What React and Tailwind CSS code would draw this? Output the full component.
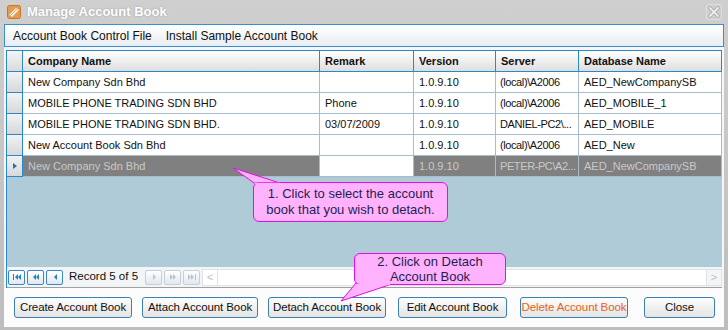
import React from 'react'

const ROWS = [
  { name: 'New Company Sdn Bhd', remark: '', version: '1.0.9.10', server: '(local)\\A2006', db: 'AED_NewCompanySB' },
  { name: 'MOBILE PHONE TRADING SDN BHD', remark: 'Phone', version: '1.0.9.10', server: '(local)\\A2006', db: 'AED_MOBILE_1' },
  { name: 'MOBILE PHONE TRADING SDN BHD.', remark: '03/07/2009', version: '1.0.9.10', server: 'DANIEL-PC2\\...', db: 'AED_MOBILE' },
  { name: 'New Account Book Sdn Bhd', remark: '', version: '1.0.9.10', server: '(local)\\A2006', db: 'AED_New' },
  { name: 'New Company Sdn Bhd', remark: '', version: '1.0.9.10', server: 'PETER-PC\\A2...', db: 'AED_NewCompanySB', selected: true },
]

const COLS = 'grid grid-cols-[16px_297px_94px_82px_83px_1fr]'

function NavBtn({ kind, disabled }) {
  const c = disabled ? '#b9c4cf' : '#2a7fc4'
  const tri = (x, dir) =>
    dir === 'l' ? `M${x} 4 L${x} 10 L${x - 3} 7 Z` : `M${x} 4 L${x} 10 L${x + 3} 7 Z`
  let d = ''
  if (kind === 'first') d = 'M4 4 H5 V10 H4 Z ' + tri(9, 'l') + ' ' + tri(12, 'l')
  if (kind === 'pprev') d = tri(8, 'l') + ' ' + tri(11, 'l')
  if (kind === 'prev') d = tri(10, 'l')
  if (kind === 'next') d = tri(7, 'r')
  if (kind === 'nnext') d = tri(5, 'r') + ' ' + tri(8, 'r')
  if (kind === 'last') d = tri(4, 'r') + ' ' + tri(7, 'r') + ' M11 4 H12 V10 H11 Z'
  return (
    <div
      className={`w-[17px] h-[15px] rounded-[2px] border flex items-center justify-center bg-gradient-to-b from-[#ffffff] to-[#e2e8ee] ${
        disabled ? 'border-[#c4d0dc]' : 'border-[#3b86c6]'
      }`}
    >
      <svg width="15" height="14" viewBox="0 0 15 14">
        <path d={d} fill={c} />
      </svg>
    </div>
  )
}

function Btn({ children, className, orange }) {
  return (
    <div
      className={`h-[21px] rounded-[3px] border border-[#3c7fb1] bg-gradient-to-b from-[#fdfdfd] to-[#e4e4e4] flex items-center justify-center whitespace-nowrap text-[11.5px] tracking-[-0.1px] ${
        orange ? 'text-[#e0651e]' : 'text-[#111]'
      } ${className}`}
    >
      {children}
    </div>
  )
}

export default function App() {
  return (
    <div className="relative w-[728px] h-[330px] overflow-hidden bg-gradient-to-b from-[#cfcfcf] to-[#bdbdbd] flex flex-col font-['Liberation_Sans',Arial,sans-serif]">
      {/* Title bar */}
      <div className="h-[24px] flex items-center pl-[7px] pr-[6px]">
        <svg width="14" height="14" viewBox="0 0 14 14">
          <rect x="0.5" y="0.5" width="13" height="13" rx="2" fill="#e79a4c" stroke="#c2772e" />
          <path d="M2 10 L9 3 L12 5 L5 12 Z" fill="#f8efe2" />
          <path d="M3 11 L10 4" stroke="#b5a58e" strokeWidth="0.8" />
        </svg>
        <span className="ml-[6px] text-[13px] font-bold text-white [text-shadow:0_0_2px_rgba(0,0,0,0.25)]">
          Manage Account Book
        </span>
        <div className="ml-auto w-[16px] h-[16px] rounded-[2px] border border-[#dedede] bg-[#cecece] flex items-center justify-center">
          <svg width="12" height="12" viewBox="0 0 12 12">
            <path d="M2 2 L10 10 M10 2 L2 10" stroke="#ababab" strokeWidth="3.2" strokeLinecap="square" />
            <path d="M2 2 L10 10 M10 2 L2 10" stroke="#f6f6f6" strokeWidth="1.6" strokeLinecap="square" />
          </svg>
        </div>
      </div>

      {/* Body */}
      <div className="mx-[4px] h-[303px] bg-[#f6f6f6] flex flex-col">
        <div className="h-[23px] border border-[#3b8ed0] bg-gradient-to-b from-[#ffffff] to-[#e9edf1] flex items-center pl-[8px] gap-[14px] text-[12px] text-[#111]">
          <span>Account Book Control File</span>
          <span>Install Sample Account Book</span>
        </div>

        <div className="mt-[3px] mx-[2px] flex flex-col h-[238px] border-l border-[#2b88c8]">
          {/* header */}
          <div className={`${COLS} h-[22px] text-[11px] font-bold text-[#111]`}>
            <div className="border-t border-r border-b border-[#2b88c8] bg-gradient-to-b from-[#f4f4f4] to-[#dadada]" />
            {['Company Name', 'Remark', 'Version', 'Server', 'Database Name'].map(h => (
              <div
                key={h}
                className="border-t border-r border-b border-[#2b88c8] bg-gradient-to-b from-[#ffffff] to-[#dedede] flex items-center pl-[5px]"
              >
                {h}
              </div>
            ))}
          </div>

          {/* rows */}
          {ROWS.map((r, i) => (
            <div key={i} className={`${COLS} h-[21px] text-[11px]`}>
              <div className="border-r border-b border-[#2b88c8] bg-gradient-to-b from-[#f2f2f2] to-[#d8d8d8] flex items-center justify-center">
                {r.selected && (
                  <svg width="6" height="8" viewBox="0 0 6 8">
                    <path d="M1 1 L5 4 L1 7 Z" fill="#2a6fb4" />
                  </svg>
                )}
              </div>
              {[r.name, r.remark, r.version, r.server, r.db].map((v, j) => {
                const white = !r.selected || j === 1
                return (
                  <div
                    key={j}
                    className={`border-r border-b border-[#a8bccb] flex items-center whitespace-nowrap overflow-hidden ${
                      j === 3 ? 'pl-[4px] tracking-[-0.4px]' : 'pl-[5px]'
                    } ${white ? 'bg-white text-[#111]' : 'bg-[#808080] text-[#c9c9c9]'}`}
                  >
                    {v}
                  </div>
                )
              })}
            </div>
          ))}

          <div className="flex-1 bg-[#afcbd8]" />

          {/* navigator */}
          <div className="h-[21px] bg-[#f2f4f6] border-b border-[#a0a0a0] flex items-center pl-[1px] gap-[2px]">
            <NavBtn kind="first" />
            <NavBtn kind="pprev" />
            <NavBtn kind="prev" />
            <span className="text-[11.5px] text-[#111] ml-[4px] mr-[5px]">Record 5 of 5</span>
            <NavBtn kind="next" disabled />
            <NavBtn kind="nnext" disabled />
            <NavBtn kind="last" disabled />
            <div className="flex-1 h-[17px] bg-white border border-[#dde3e8] flex items-center justify-between">
              <div className="w-[15px] h-full border-r border-[#dde3e8] flex items-center justify-center text-[#b8c0c8] text-[11px]">
                &lt;
              </div>
              <div className="w-[15px] h-full border-l border-[#dde3e8] bg-[#f3f5f7] flex items-center justify-center text-[#b8c0c8] text-[11px]">
                &gt;
              </div>
            </div>
          </div>
        </div>

        {/* buttons */}
        <div className="flex-1 bg-[#fcfcfc] flex items-start pt-[9px]">
          <Btn className="ml-[10px] w-[118px]">Create Account Book</Btn>
          <Btn className="ml-[10px] w-[116px]">Attach Account Book</Btn>
          <Btn className="ml-[10px] w-[118px]">Detach Account Book</Btn>
          <Btn className="ml-[12px] w-[109px]">Edit Account Book</Btn>
          <Btn className="ml-[13px] w-[108px]" orange>Delete Account Book</Btn>
          <Btn className="ml-[16px] w-[71px]">Close</Btn>
        </div>
      </div>

      {/* callout pointers */}
      <svg className="absolute left-0 top-0" width="728" height="330" viewBox="0 0 728 330">
        <path d="M254 183 L233 168 L280 183 Z" fill="#ffb3ff" stroke="#e010e0" strokeWidth="1" />
        <path d="M356 283 L341 301 L392 284 Z" fill="#ffb3ff" stroke="#e010e0" strokeWidth="1" />
      </svg>

      {/* callout 1 */}
      <div className="absolute left-[253px] top-[182px] w-[195px] h-[40px] rounded-[6px] border border-[#e010e0] bg-[#ffb3ff] flex flex-col items-center justify-center text-[13px] leading-[16px] text-[#1e1e50]">
        <span>1. Click to select the account</span>
        <span>book that you wish to detach.</span>
      </div>

      {/* callout 2 */}
      <div className="absolute left-[354px] top-[253px] w-[152px] h-[32px] rounded-[6px] border border-[#e010e0] bg-[#ffb3ff] flex flex-col items-center justify-center text-[13px] leading-[15px] text-[#1e1e50]">
        <span>2. Click on Detach</span>
        <span>Account Book</span>
      </div>

      <svg className="absolute left-0 top-0 pointer-events-none" width="728" height="330" viewBox="0 0 728 330">
        <path d="M255 183.5 L280 183.5" stroke="#ffb3ff" strokeWidth="1.5" />
        <path d="M357 284.5 L390 284.5" stroke="#ffb3ff" strokeWidth="1.5" />
      </svg>
    </div>
  )
}
